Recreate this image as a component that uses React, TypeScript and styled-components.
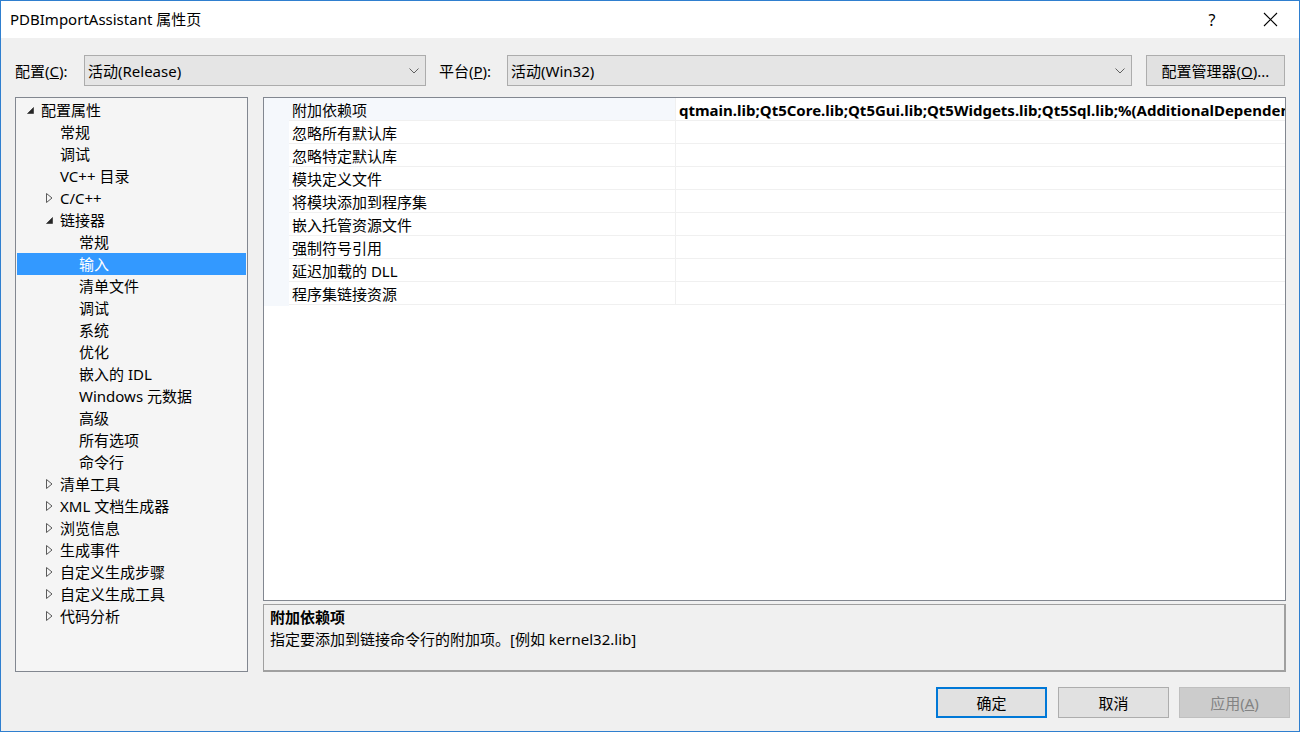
import React from "react";
import styled, { createGlobalStyle } from "styled-components";

const Global = createGlobalStyle`
  html, body { margin: 0; padding: 0; background: #ffffff; }
  body { font-family: "Noto Sans", "Noto Sans CJK SC", sans-serif; font-size: 15px; color: #000; }
  * { box-sizing: border-box; }
`;

const Window = styled.div`
  width: 1300px;
  height: 732px;
  border: 1px solid #2f7fcf;
  display: flex;
  flex-direction: column;
  background: #f0f0f0;
  overflow: hidden;
`;

const TitleBar = styled.div`
  height: 37px;
  flex: none;
  background: #ffffff;
  display: flex;
  align-items: center;
  padding-left: 9px;
`;

const TitleText = styled.div`
  flex: 1;
  font-size: 15px;
  line-height: 20px;
  padding-bottom: 1px;
`;

const TitleButton = styled.div`
  width: 58px;
  height: 37px;
  display: flex;
  align-items: center;
  justify-content: center;
  font-size: 16px;
  color: #000;
`;

const Body = styled.div`
  flex: 1;
  display: flex;
  flex-direction: column;
  padding: 17px 9px 13px 14px;
  min-height: 0;
`;

const ConfigRow = styled.div`
  display: flex;
  align-items: center;
  height: 31px;
`;

const Label = styled.span<{ $w: number; $indent?: number }>`
  width: ${(p) => p.$w}px;
  padding-left: ${(p) => p.$indent ?? 0}px;
  flex: none;
  line-height: 20px;
  white-space: nowrap;
`;

const Combo = styled.div<{ $w: number }>`
  width: ${(p) => p.$w}px;
  flex: none;
  height: 31px;
  background: #e5e5e5;
  border: 1px solid #acacac;
  display: flex;
  align-items: center;
  padding-left: 3px;
  padding-right: 6px;
`;

const ComboText = styled.span`
  flex: 1;
  line-height: 20px;
`;

const Spacer = styled.span<{ $w: number }>`
  width: ${(p) => p.$w}px;
  flex: none;
`;

const PushButton = styled.div<{ $w: number; $variant?: "default" | "normal" | "disabled" }>`
  width: ${(p) => p.$w}px;
  flex: none;
  height: 31px;
  display: flex;
  align-items: center;
  justify-content: center;
  line-height: 20px;
  background: ${(p) => (p.$variant === "disabled" ? "#cccccc" : "#e1e1e1")};
  color: ${(p) => (p.$variant === "disabled" ? "#838383" : "#000")};
  border: ${(p) =>
    p.$variant === "default"
      ? "2px solid #0078d7"
      : p.$variant === "disabled"
      ? "1px solid #bfbfbf"
      : "1px solid #adadad"};
`;

const Main = styled.div`
  flex: 1;
  display: flex;
  margin-top: 11px;
  min-height: 0;
  padding-right: 4px;
`;

const TreePanel = styled.div`
  width: 233px;
  flex: none;
  border: 1px solid #828790;
  background: #f5f5f5;
  padding: 1px 1px 0 1px;
`;

const TreeRow = styled.div<{ $level: number; $selected?: boolean }>`
  height: 22px;
  display: flex;
  align-items: center;
  padding-left: ${(p) => 9 + p.$level * 19}px;
  background: ${(p) => (p.$selected ? "#3399ff" : "transparent")};
  color: ${(p) => (p.$selected ? "#ffffff" : "#000")};
  white-space: nowrap;
`;

const Expander = styled.span`
  width: 15px;
  flex: none;
  display: flex;
  align-items: center;
  padding-left: 1px;
`;

const TreeText = styled.span`
  line-height: 20px;
`;

const RightColumn = styled.div`
  flex: 1;
  margin-left: 15px;
  display: flex;
  flex-direction: column;
  min-width: 0;
`;

const Grid = styled.div`
  flex: 1;
  border: 1px solid #828790;
  background: #ffffff;
  display: flex;
  min-height: 0;
`;

const Gutter = styled.div`
  width: 25px;
  flex: none;
  align-self: flex-start;
  height: 208px;
  background: #f5f8fc;
`;

const Rows = styled.div`
  flex: 1;
  min-width: 0;
  display: flex;
  flex-direction: column;
`;

const PropRow = styled.div<{ $first?: boolean }>`
  height: 23px;
  display: flex;
  border-bottom: 1px solid #f0f0f0;
  background: ${(p) => (p.$first ? "#f5f8fc" : "#ffffff")};
`;

const NameCell = styled.div`
  width: 387px;
  flex: none;
  padding-left: 3px;
  padding-top: 1px;
  display: flex;
  align-items: center;
  line-height: 20px;
  border-right: 1px solid #f0f0f0;
  white-space: nowrap;
`;

const ValueCell = styled.div`
  flex: 1;
  min-width: 0;
  padding-left: 3px;
  padding-top: 1px;
  display: flex;
  align-items: center;
  line-height: 20px;
  font-weight: bold;
  font-size: 15px;
  white-space: nowrap;
  overflow: hidden;
  background: #ffffff;
`;

const Desc = styled.div`
  height: 68px;
  flex: none;
  margin-top: 3px;
  border: 1px solid #a0a0a0;
  border-bottom-width: 2px;
  border-right-width: 2px;
  background: #f0f0f0;
  padding: 1px 6px;
`;

const DescTitle = styled.div`
  font-weight: bold;
  line-height: 22px;
  font-size: 15px;
`;

const DescText = styled.div`
  line-height: 22px;
  font-size: 15px;
`;

const Footer = styled.div`
  display: flex;
  justify-content: flex-end;
  margin-top: 15px;
`;

const ChevronDown = () => (
  <svg width="10" height="6" viewBox="0 0 10 6">
    <path d="M0.5 0.5 L5 5 L9.5 0.5" fill="none" stroke="#606060" strokeWidth="1" />
  </svg>
);

const Expanded = () => (
  <svg width="7" height="7" viewBox="0 0 7 7">
    <path d="M6.5 0.5 L6.5 6.5 L0.5 6.5 Z" fill="#262626" stroke="#262626" strokeWidth="0.6" />
  </svg>
);

const Collapsed = () => (
  <svg width="7" height="10" viewBox="0 0 7 10">
    <path d="M0.5 0.5 L6 5 L0.5 9.5 Z" fill="none" stroke="#5a5a5a" strokeWidth="1" />
  </svg>
);

const CloseIcon = () => (
  <svg width="15" height="15" viewBox="0 0 15 15">
    <path d="M1 1 L14 14 M14 1 L1 14" stroke="#000" strokeWidth="1.1" />
  </svg>
);

type Node = { label: string; level: number; exp?: "open" | "closed"; selected?: boolean };

const tree: Node[] = [
  { label: "配置属性", level: 0, exp: "open" },
  { label: "常规", level: 1 },
  { label: "调试", level: 1 },
  { label: "VC++ 目录", level: 1 },
  { label: "C/C++", level: 1, exp: "closed" },
  { label: "链接器", level: 1, exp: "open" },
  { label: "常规", level: 2 },
  { label: "输入", level: 2, selected: true },
  { label: "清单文件", level: 2 },
  { label: "调试", level: 2 },
  { label: "系统", level: 2 },
  { label: "优化", level: 2 },
  { label: "嵌入的 IDL", level: 2 },
  { label: "Windows 元数据", level: 2 },
  { label: "高级", level: 2 },
  { label: "所有选项", level: 2 },
  { label: "命令行", level: 2 },
  { label: "清单工具", level: 1, exp: "closed" },
  { label: "XML 文档生成器", level: 1, exp: "closed" },
  { label: "浏览信息", level: 1, exp: "closed" },
  { label: "生成事件", level: 1, exp: "closed" },
  { label: "自定义生成步骤", level: 1, exp: "closed" },
  { label: "自定义生成工具", level: 1, exp: "closed" },
  { label: "代码分析", level: 1, exp: "closed" },
];

const props: { name: string; value?: string }[] = [
  {
    name: "附加依赖项",
    value: "qtmain.lib;Qt5Core.lib;Qt5Gui.lib;Qt5Widgets.lib;Qt5Sql.lib;%(AdditionalDependencies)",
  },
  { name: "忽略所有默认库" },
  { name: "忽略特定默认库" },
  { name: "模块定义文件" },
  { name: "将模块添加到程序集" },
  { name: "嵌入托管资源文件" },
  { name: "强制符号引用" },
  { name: "延迟加载的 DLL" },
  { name: "程序集链接资源" },
];

export default function App() {
  return (
    <>
      <Global />
      <Window>
        <TitleBar>
          <TitleText>PDBImportAssistant 属性页</TitleText>
          <TitleButton>?</TitleButton>
          <TitleButton>
            <CloseIcon />
          </TitleButton>
        </TitleBar>
        <Body>
          <ConfigRow>
            <Label $w={69}>
              配置(<u>C</u>):
            </Label>
            <Combo $w={342}>
              <ComboText>活动(Release)</ComboText>
              <ChevronDown />
            </Combo>
            <Label $w={81} $indent={13}>
              平台(<u>P</u>):
            </Label>
            <Combo $w={625}>
              <ComboText>活动(Win32)</ComboText>
              <ChevronDown />
            </Combo>
            <Spacer $w={14} />
            <PushButton $w={139}>
              配置管理器(<u>O</u>)...
            </PushButton>
          </ConfigRow>
          <Main>
            <TreePanel>
              {tree.map((n, i) => (
                <TreeRow key={i} $level={n.level} $selected={n.selected}>
                  <Expander>
                    {n.exp === "open" ? <Expanded /> : n.exp === "closed" ? <Collapsed /> : null}
                  </Expander>
                  <TreeText>{n.label}</TreeText>
                </TreeRow>
              ))}
            </TreePanel>
            <RightColumn>
              <Grid>
                <Gutter />
                <Rows>
                  {props.map((p, i) => (
                    <PropRow key={i} $first={i === 0}>
                      <NameCell>{p.name}</NameCell>
                      <ValueCell>{p.value ?? ""}</ValueCell>
                    </PropRow>
                  ))}
                </Rows>
              </Grid>
              <Desc>
                <DescTitle>附加依赖项</DescTitle>
                <DescText>指定要添加到链接命令行的附加项。[例如 kernel32.lib]</DescText>
              </Desc>
            </RightColumn>
          </Main>
          <Footer>
            <PushButton $w={111} $variant="default">确定</PushButton>
            <Spacer $w={11} />
            <PushButton $w={111}>取消</PushButton>
            <Spacer $w={10} />
            <PushButton $w={111} $variant="disabled">
              应用(<u>A</u>)
            </PushButton>
          </Footer>
        </Body>
      </Window>
    </>
  );
}
